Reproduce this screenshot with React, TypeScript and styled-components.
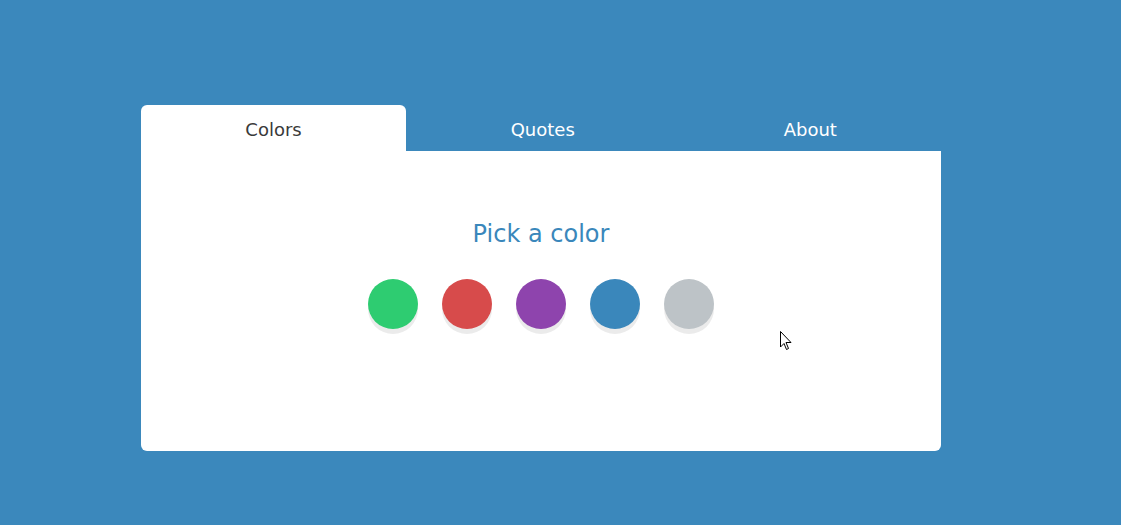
import React, { useState } from "react";
import styled, { createGlobalStyle } from "styled-components";

const Global = createGlobalStyle`
  html, body { margin: 0; padding: 0; background: #3b88bc; }
  body { font-family: "DejaVu Sans", Verdana, sans-serif; }
`;

const Page = styled.div`
  width: 1121px;
  height: 525px;
  background: #3b88bc;
  padding: 105px 0 0 141px;
  box-sizing: border-box;
  position: relative;
`;

const Card = styled.div`
  width: 800px;
  display: flex;
  flex-direction: column;
`;

const TabBar = styled.div`
  display: grid;
  grid-template-columns: 265px 1fr 1fr;
  height: 46px;
`;

const Tab = styled.button<{ $active?: boolean }>`
  border: none;
  margin: 0;
  padding: 2px 0 0 ${(p) => (p.$active ? "0" : "6px")};
  font-family: "DejaVu Sans", Verdana, sans-serif;
  font-size: 18px;
  background: ${(p) => (p.$active ? "#ffffff" : "transparent")};
  color: ${(p) => (p.$active ? "#3a3a3a" : "#ffffff")};
  border-radius: 6px 6px 0 0;
  cursor: pointer;
  display: flex;
  align-items: center;
  justify-content: center;
`;

const Body = styled.div`
  background: #ffffff;
  height: 300px;
  border-radius: 0 0 6px 6px;
  display: flex;
  flex-direction: column;
  align-items: center;
  padding-top: 67px;
  box-sizing: border-box;
`;

const Title = styled.h2`
  margin: 0;
  font-weight: normal;
  font-size: 24px;
  color: #3a87bb;
  line-height: 32px;
`;

const Swatches = styled.div`
  display: flex;
  gap: 24px;
  margin-top: 29px;
`;

const Swatch = styled.div<{ $color: string }>`
  width: 50px;
  height: 50px;
  border-radius: 50%;
  background: ${(p) => p.$color};
  box-shadow: 0 5px 0 rgba(0, 0, 0, 0.08);
  cursor: pointer;
`;

const Cursor = styled.svg`
  position: absolute;
  left: 780px;
  top: 331px;
`;

const colors = ["#2ecc71", "#d74b4b", "#8e44ad", "#3a87bb", "#bdc3c7"];

export default function App() {
  const [active, setActive] = useState(0);
  const tabs = ["Colors", "Quotes", "About"];
  return (
    <Page>
      <Global />
      <Card>
        <TabBar>
          {tabs.map((t, i) => (
            <Tab key={t} $active={i === active} onClick={() => setActive(i)}>
              {t}
            </Tab>
          ))}
        </TabBar>
        <Body>
          <Title>Pick a color</Title>
          <Swatches>
            {colors.map((c) => (
              <Swatch key={c} $color={c} />
            ))}
          </Swatches>
        </Body>
      </Card>
      <Cursor width="13" height="20" viewBox="0 0 13 20">
        <path
          d="M0.5 0.5 L0.5 16 L4 12.5 L6.5 18.5 L8.5 17.5 L6 11.5 L11 11.5 Z"
          fill="#ffffff"
          stroke="#000000"
          strokeWidth="1"
          strokeLinejoin="miter"
        />
      </Cursor>
    </Page>
  );
}
